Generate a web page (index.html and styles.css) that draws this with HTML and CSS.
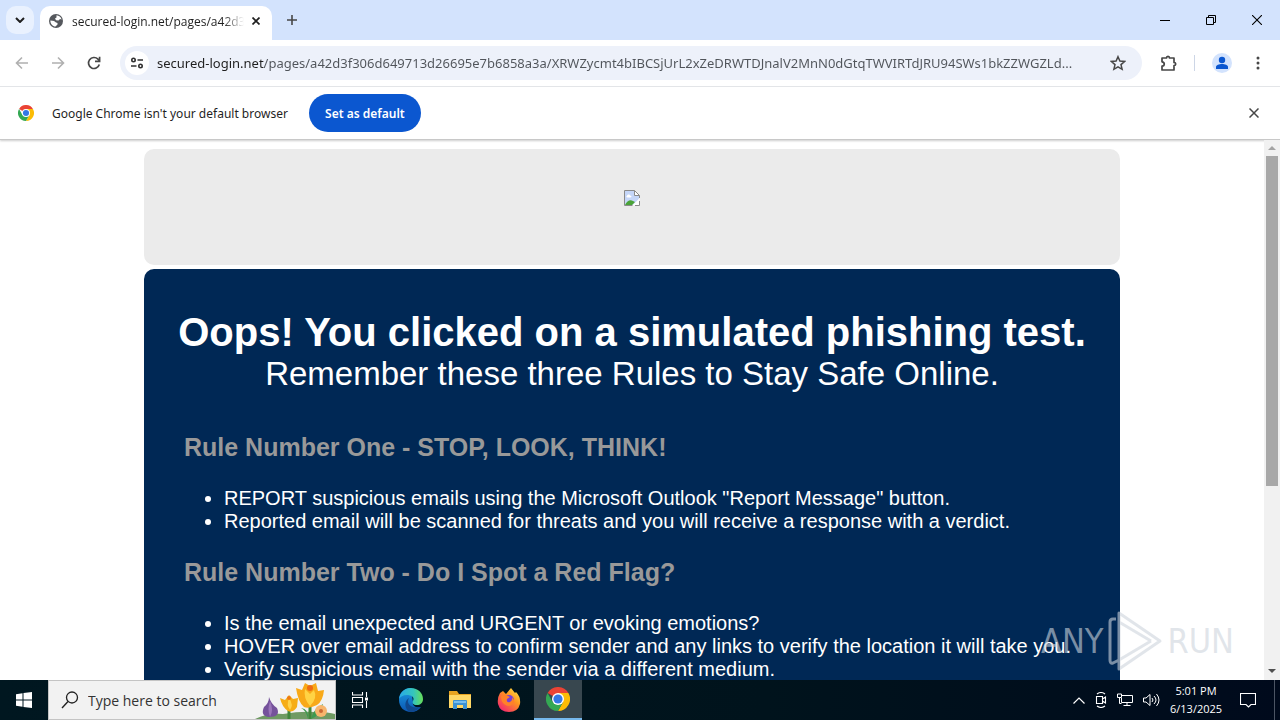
FILE: index.html
```html
<!DOCTYPE html>
<html lang="en">
<head>
    <meta charset="UTF-8">
    <meta name="viewport" content="width=device-width, initial-scale=1.0">
    <title>secured-login.net</title>
    <link rel="stylesheet" href="styles.css">
</head>
<body>
    <header class="browser">
        <div class="tab-strip">
            <button class="tab-search" aria-label="Search tabs">
                <svg width="10" height="6" viewBox="0 0 10 6"><path d="M1 1l4 4 4-4" fill="none" stroke="#1f1f1f" stroke-width="2"/></svg>
            </button>
            <div class="tab">
                <svg width="14" height="14" viewBox="0 0 14 14">
                    <circle cx="7" cy="7" r="7" fill="#55585d"/>
                    <path d="M7.5 1.3C10 1.5 12 3.2 12.6 5.5L11 5 9.500 6.500 7 6.200 6 4.500 7.500 3.500zM1.400 6.500L5 7l2 1.500 1.500.5v1.500L6.500 12.600C3.700 12.400 1.400 10 1.400 7z" fill="#fff"/>
                </svg>
                <span class="tab-title">secured-login.net/pages/a42d3</span>
                <button class="tab-close" aria-label="Close tab">
                    <svg width="8" height="8" viewBox="0 0 8 8"><path d="M.5.500l7 7M7.500.500l-7 7" stroke="#1f1f1f" stroke-width="1.700"/></svg>
                </button>
            </div>
            <button class="new-tab" aria-label="New tab">
                <svg width="12" height="12" viewBox="0 0 12 12"><path d="M6 1v10M1 6h10" stroke="#474747" stroke-width="1.600"/></svg>
            </button>
            <div class="window-buttons">
                <button aria-label="Minimize"><svg width="10" height="10" viewBox="0 0 10 10"><path d="M0 5.500h10" stroke="#000"/></svg></button>
                <button aria-label="Restore"><svg width="10" height="10" viewBox="0 0 10 10"><path d="M.5 2.500h7v7h-7zM2.500 2.500v-2h7v7h-2" fill="none" stroke="#000"/></svg></button>
                <button aria-label="Close"><svg width="10" height="10" viewBox="0 0 10 10"><path d="M0 0l10 10M10 0L0 10" stroke="#000" stroke-width="1.100"/></svg></button>
            </div>
        </div>

        <div class="toolbar">
            <button aria-label="Back"><svg width="14" height="14" viewBox="0 0 14 14"><path d="M13 7H2M7 1.500L1.500 7 7 12.500" fill="none" stroke="#b0b0b0" stroke-width="1.600"/></svg></button>
            <button aria-label="Forward"><svg width="14" height="14" viewBox="0 0 14 14"><path d="M1 7h11M7 1.500L12.500 7 7 12.500" fill="none" stroke="#b0b0b0" stroke-width="1.600"/></svg></button>
            <button aria-label="Reload"><svg width="14" height="14" viewBox="0 0 14 14"><path d="M12.300 8.500A5.500 5.500 0 1 1 11 3.200L12.500 4.800" fill="none" stroke="#474747" stroke-width="1.700"/><path d="M12.600.800v4.600H8" fill="none" stroke="#474747" stroke-width="1.700"/></svg></button>
            <div class="omnibox">
                <button class="site-info" aria-label="Site information">
                    <svg width="14" height="12" viewBox="0 0 14 12"><g fill="none" stroke="#303030" stroke-width="1.600"><circle cx="3.500" cy="3" r="1.700"/><path d="M7.500 3H13M1 9h5.500"/><circle cx="10.500" cy="9" r="1.700"/></g></svg>
                </button>
                <input class="url" type="text" aria-label="Address" value="secured-login.net/pages/a42d3f306d649713d26695e7b6858a3a/XRWZycmt4bIBCSjUrL2xZeDRWTDJnalV2MnN0dGtqTWVIRTdJRU94SWs1bkZZWGZLd...">
                <button class="star" aria-label="Bookmark">
                    <svg width="16" height="16" viewBox="0 0 16 16"><path d="M8 1.700l1.900 4.400 4.700.4-3.600 3.100 1.100 4.700L8 11.800l-4.100 2.500L5 9.600 1.400 6.500l4.700-.4z" fill="none" stroke="#474747" stroke-width="1.500"/></svg>
                </button>
            </div>
            <div class="toolbar-end">
                <button aria-label="Extensions"><svg width="18" height="18" viewBox="0 0 18 18"><path d="M2 4h4.500c0-2.200 3-2.200 3 0H14v4.500c2.300 0 2.300 3 0 3V16H2v-3.800c3-.3 3-4.100 0-4.400z" fill="none" stroke="#474747" stroke-width="1.700" stroke-linejoin="round"/></svg></button>
                <span class="divider"></span>
                <button class="profile" aria-label="Profile"><svg width="20" height="20" viewBox="0 0 20 20"><circle cx="10" cy="10" r="10" fill="#d3e3fd"/><circle cx="10" cy="7" r="3.200" fill="#0b57d0"/><path d="M4 16v-2c0-4 12-4 12 0v2z" fill="#0b57d0"/></svg></button>
                <button aria-label="Menu"><svg width="4" height="14" viewBox="0 0 4 14" fill="#474747"><circle cx="2" cy="2" r="1.500"/><circle cx="2" cy="7" r="1.500"/><circle cx="2" cy="12" r="1.500"/></svg></button>
            </div>
        </div>

        <div class="infobar">
            <svg width="16" height="16" viewBox="0 0 24 24"><use href="#chrome"/></svg>
            <span>Google Chrome isn't your default browser</span>
            <button class="set-default">Set as default</button>
            <button class="infobar-close" aria-label="Dismiss"><svg width="10" height="10" viewBox="0 0 10 10"><path d="M.5.500l9 9M9.500.500l-9 9" stroke="#474747" stroke-width="1.500"/></svg></button>
        </div>
    </header>

    <div class="viewport">
        <main class="page">
            <section class="logo-panel">
                <svg width="16" height="16" viewBox="0 0 16 16" role="img" aria-label="Missing image">
                    <path d="M.5.500h10l5 5v10H.500z" fill="#fff"/>
                    <path d="M1 1h9.500v4.500H15V9L9 15H1z" fill="#c5d6f8"/>
                    <path d="M3 6c0-2 3-2 3-.500 2 0 2 2 0 2H3.500C2 7.500 2 6 3 6z" fill="#fff"/>
                    <path d="M1 15c2-4 5-6 8-4l2 1-3 3z" fill="#4ba338"/>
                    <path d="M15 9l-6 6h2l4-4z" fill="#fff"/>
                    <path d="M15.500 8V5.500l-5-5H.500v15h8M10.500.500v5h5M11 15.500h4.500V11" fill="none" stroke="#8a8a8a"/>
                </svg>
            </section>
            <section class="lesson">
                <h1>Oops! You clicked on a simulated phishing test.</h1>
                <p class="subtitle">Remember these three Rules to Stay Safe Online.</p>
                <h2>Rule Number One - STOP, LOOK, THINK!</h2>
                <ul>
                    <li>REPORT suspicious emails using the Microsoft Outlook "Report Message" button.</li>
                    <li>Reported email will be scanned for threats and you will receive a response with a verdict.</li>
                </ul>
                <h2>Rule Number Two - Do I Spot a Red Flag?</h2>
                <ul>
                    <li>Is the email unexpected and URGENT or evoking emotions?</li>
                    <li>HOVER over email address to confirm sender and any links to verify the location it will take you.</li>
                    <li>Verify suspicious email with the sender via a different medium.</li>
                </ul>
            </section>
        </main>
        <div class="scrollbar">
            <svg width="8" height="4" viewBox="0 0 8 4"><path d="M0 4l4-4 4 4z" fill="#a3a3a3"/></svg>
            <div class="track"><div class="thumb"></div></div>
            <svg width="8" height="4" viewBox="0 0 8 4"><path d="M0 0l4 4 4-4z" fill="#505050"/></svg>
        </div>
        <div class="watermark">
            <span>ANY</span>
            <svg width="56" height="62" viewBox="0 0 56 62"><path d="M9 9H6q-3 0-3 3v38q0 4 3 3l6-3M12 3v56l41-28zM12 12l32 19M12 50l32-19" fill="none" stroke="currentColor" stroke-width="3" stroke-linejoin="round"/></svg>
            <span>RUN</span>
        </div>
    </div>

    <footer class="taskbar">
        <button class="start" aria-label="Start">
            <svg width="16" height="16" viewBox="0 0 16 16" fill="#fff"><path d="M0 2.200l6.500-.9v6.200H0zM7.500 1.100L16 0v7.500H7.500zM0 8.500h6.500v6.200L0 13.800zM7.500 8.500H16V16l-8.500-1.100z"/></svg>
        </button>
        <label class="search">
            <svg width="18" height="18" viewBox="0 0 18 18"><circle cx="11" cy="6.500" r="5.500" fill="none" stroke="#222" stroke-width="1.300"/><path d="M7 10.500L1 17" stroke="#222" stroke-width="1.400"/></svg>
            <input type="text" placeholder="Type here to search" aria-label="Search">
            <svg width="80" height="38" viewBox="0 0 80 38">
                <path d="M0 38q12-6 28-5 18-3 32-2 14 0 20 2v5z" fill="#6f9a63"/>
                <path d="M55 38V24M34 38V28" stroke="#41863c" stroke-width="3"/>
                <path d="M56 38q2-10 12-15-2 11-12 15zM53 38q-2-9-7-11 8 1 7 11z" fill="#3e9950"/>
                <path d="M14 16q0 6-5 10-4 9 5 10 12 0 8-9-6-4-8-11z" fill="#75529b"/>
                <path d="M15 20q-3 8 0 16 4-7 0-16z" fill="#9b76ba"/>
                <path d="M25 17l5 2 4-5 4 4 5-1-1 9q-4 6-9 4-6-4-8-13z" fill="#f6ad16"/>
                <path d="M34 17q-3 7 1 12 4-5-1-12z" fill="#ffd249"/>
                <path d="M41 7l6 2 3-7 5 3 6-3 2 8 6-1q-1 11-7 15-8 4-13 2-6-5-8-19z" fill="#f8a918"/>
                <path d="M50 8q-2 9 5 17 8-8 4-16l-4 4z" fill="#ffd344"/>
                <circle cx="55" cy="7" r="3" fill="#ed6b13"/><circle cx="34" cy="17" r="2" fill="#ed7a13"/>
                <circle cx="66" cy="30" r="6" fill="#f7b56d"/><circle cx="66" cy="30" r="2" fill="#cb6934"/>
            </svg>
        </label>
        <nav class="apps">
            <button class="task-view" aria-label="Task View"><svg width="16" height="16" viewBox="0 0 16 16"><path d="M.5 0v3h10V0M.500 16v-3h10v3M.500 5.500h10v5H.500zM14.500 0v5M14.500 9v7" fill="none" stroke="#fff" stroke-width="1.100"/><path d="M13 5.500h3v3h-3z" fill="#fff"/></svg></button>
            <button aria-label="Edge">
                <svg width="24" height="24" viewBox="0 0 24 24">
                    <defs>
                        <linearGradient id="edgeTop" x1="0" x2="1"><stop offset="0" stop-color="#28a9e8"/><stop offset=".6" stop-color="#35c5bd"/><stop offset="1" stop-color="#67df58"/></linearGradient>
                        <linearGradient id="edgeLow" x1="0" y1="0" x2="0" y2="1"><stop offset="0" stop-color="#1c9de2"/><stop offset="1" stop-color="#0b55b2"/></linearGradient>
                    </defs>
                    <path d="M12 0C4 0 0 6 0 12c0 7 5 12 12 12 4 0 8-2 10-5-5 1-9-1-8-5z" fill="url(#edgeLow)"/>
                    <path d="M0 11C1 4 6 0 12 0c7 0 12 5 12 11 0 4-3 6-6 6-4 0-5-2-4-4 2-4-2-6-6-6-4 0-7 2-8 4z" fill="url(#edgeTop)"/>
                    <path d="M10 10c-3 5 1 11 11 9-3 4-7 5-10 5-6-3-6-11-1-14z" fill="#10488d"/>
                </svg>
            </button>
            <button aria-label="File Explorer"><svg width="22" height="20" viewBox="0 0 22 20"><path d="M0 1h8l2 3h12v14H0z" fill="#e8a420"/><path d="M0 5h22v13H0z" fill="#ffd866"/><path d="M4 19v-8q0-1 1-1h12q1 0 1 1v8h-4v-4H8v4z" fill="#3b92d4"/><path d="M5 11h12v2H5z" fill="#74bdf0"/></svg></button>
            <button aria-label="Firefox">
                <svg width="24" height="24" viewBox="0 0 24 24">
                    <defs><linearGradient id="fire" x1="1" y1="0" x2=".2" y2="1"><stop offset="0" stop-color="#fff04b"/><stop offset=".45" stop-color="#ff9420"/><stop offset="1" stop-color="#f32371"/></linearGradient></defs>
                    <path d="M3 5l3-2 3 3 5-6 4 5 1-1q5 5 4 12-2 8-11 8T1 16Q0 10 3 5z" fill="url(#fire)"/>
                    <circle cx="12" cy="12" r="5" fill="#7540d8"/>
                    <path d="M4 8q4-2 7 0l2 1-3 2q-1 4 3 3 3-2 2-5 4 4 1 7-4 4-9 0-3-3-3-8z" fill="#ff8228"/>
                </svg>
            </button>
            <button class="active" aria-label="Chrome">
                <svg width="24" height="24" viewBox="0 0 24 24">
                    <g id="chrome">
                        <path d="M12 12L1.600 6A12 12 0 0 1 22.400 6z" fill="#ea4335"/>
                        <path d="M12 12V6h10.400A12 12 0 0 1 12 24l5-9z" fill="#fbbc05"/>
                        <path d="M12 12l5 3-5 9A12 12 0 0 1 1.600 6l5 9z" fill="#34a853"/>
                        <circle cx="12" cy="12" r="6" fill="#fff"/><circle cx="12" cy="12" r="4.600" fill="#3478e5"/>
                    </g>
                </svg>
            </button>
        </nav>
        <div class="tray">
            <svg width="12" height="7" viewBox="0 0 12 7"><path d="M.5 6.500L6 1l5.500 5.500" fill="none" stroke="#fff" stroke-width="1.200"/></svg>
            <svg width="12" height="16" viewBox="0 0 12 16"><path d="M1.500 4.500h6v7h-6zM7.500 7l3-2v6l-3-2M2 2q4-3 8 0M2 14q4 3 8 0" fill="none" stroke="#fff" stroke-width="1.100"/></svg>
            <svg width="16" height="14" viewBox="0 0 16 14"><path d="M5 2.500h10.500v7H4.500V5M10 9.500v3M6.500 12.500h7M.500 1h4v3.500h-4zM2.500 4.500v6h2" fill="none" stroke="#fff"/></svg>
            <svg width="17" height="14" viewBox="0 0 17 14"><path d="M.5 5v4h2.500l4 3.500v-11L3 5zM9 5q2 2 0 4M11 3q4 4 0 8M13.500 1q5 6 0 12" fill="none" stroke="#fff"/></svg>
            <div class="clock"><span>5:01 PM</span><span>6/13/2025</span></div>
            <button aria-label="Notifications"><svg width="16" height="16" viewBox="0 0 16 16"><path d="M.5 1.500h15v11H11l-2.500 2.500L6 12.500H.500z" fill="none" stroke="#fff" stroke-width="1.100"/></svg></button>
            <span class="show-desktop"></span>
        </div>
    </footer>
</body>
</html>
```
FILE: styles.css
```css
* {
    box-sizing: border-box;
}

body {
    margin: 0;
    height: 100vh;
    display: flex;
    flex-direction: column;
    overflow: hidden;
    background-color: #fff;
    font-family: "Noto Sans", "Open Sans", sans-serif;
    font-size: 12px;
    color: #1f1f1f;
}

button {
    display: flex;
    align-items: center;
    justify-content: center;
    padding: 0;
    border: none;
    background: none;
    font: inherit;
    color: inherit;
}

input {
    min-width: 0;
    padding: 0;
    border: none;
    outline: none;
    background: none;
    font: inherit;
}

svg {
    display: block;
    flex: none;
}

/* Browser window */
.browser {
    position: relative;
    flex: none;
    border-bottom: 1px solid #c8c8c8;
    box-shadow: 0 1px 2px rgba(0, 0, 0, 0.2);
}

.tab-strip {
    display: flex;
    align-items: center;
    height: 40px;
    padding-left: 6px;
    background-color: #d3e3fd;
}

.tab-search {
    width: 28px;
    height: 28px;
    border-radius: 10px;
    background-color: #e9f1fe;
}

.tab {
    display: flex;
    align-items: center;
    align-self: flex-end;
    width: 232px;
    height: 34px;
    margin-left: 6px;
    padding: 0 8px 4px 9px;
    border-radius: 10px 10px 0 0;
    background-color: #fff;
}

.tab-title {
    flex: 1;
    margin: 0 4px 0 9px;
    overflow: hidden;
    white-space: nowrap;
    font-family: "Open Sans", "Noto Sans", sans-serif;
    -webkit-mask-image: linear-gradient(to right, #000 88%, transparent);
    mask-image: linear-gradient(to right, #000 88%, transparent);
}

.tab-close {
    width: 16px;
    height: 16px;
}

.new-tab {
    width: 28px;
    height: 28px;
    margin-left: 6px;
}

.window-buttons {
    display: flex;
    margin-left: auto;
}

.window-buttons button {
    width: 46px;
    height: 40px;
}

.toolbar {
    display: flex;
    align-items: center;
    height: 47px;
    padding: 0 8px 0 4px;
    border-bottom: 1px solid #e3e5e8;
}

.toolbar > button {
    width: 36px;
    height: 34px;
}

.omnibox {
    display: flex;
    flex: 1;
    align-items: center;
    height: 34px;
    margin-left: 8px;
    padding: 0 12px 0 5px;
    border-radius: 17px;
    background-color: #edf1fa;
}

.site-info {
    width: 24px;
    height: 24px;
    border-radius: 12px;
    background-color: #fff;
}

.url {
    flex: 1;
    height: 24px;
    margin: 0 8px;
    font-size: 13px;
    color: transparent;
    /* host is darker than the path */
    background-image: linear-gradient(to right, #1f1f1f 107px, #50545a 107px);
    -webkit-background-clip: text;
    background-clip: text;
}

.star {
    width: 24px;
    height: 24px;
}

.toolbar-end {
    display: flex;
    align-items: center;
    width: 130px;
    padding: 0 12px 0 18px;
    justify-content: space-between;
}

.divider {
    width: 1px;
    height: 16px;
    background-color: #cdd6e6;
}

.profile {
    margin-right: 8px;
}

.infobar {
    display: flex;
    align-items: center;
    height: 52px;
    padding: 0 21px 0 18px;
}

.infobar span {
    margin: 0 21px 0 18px;
}

.set-default {
    width: 112px;
    height: 38px;
    border-radius: 19px;
    background-color: #0b57d0;
    font-weight: 600;
    color: #fff;
}

.infobar-close {
    margin-left: auto;
}

/* Page */
.viewport {
    position: relative;
    display: flex;
    flex: 1;
    min-height: 0;
    font-family: Arial, "Liberation Sans", sans-serif;
}

.page {
    display: flex;
    flex: 1;
    flex-direction: column;
    gap: 4px;
    padding: 9px 144px 0;
    overflow: hidden;
}

.logo-panel {
    display: flex;
    flex: none;
    justify-content: center;
    height: 116px;
    padding-top: 41px;
    border-radius: 10px;
    background-color: #ebebeb;
}

.lesson {
    flex: 1;
    padding: 40px 32px 0;
    border-radius: 10px 10px 0 0;
    background-color: #002855;
    color: #fff;
}

.lesson h1 {
    margin: 0;
    font-size: 40px;
    line-height: 46px;
    text-align: center;
}

.subtitle {
    margin: 0 0 40px;
    font-size: 33px;
    line-height: 38px;
    text-align: center;
}

.lesson h2 {
    margin: 0 8px 25px;
    font-size: 25px;
    line-height: 29px;
    color: #999;
}

.lesson ul {
    margin: 0 0 25px 8px;
    padding-left: 40px;
    font-size: 20px;
    line-height: 23px;
}

.lesson li {
    white-space: nowrap;
}

.scrollbar {
    display: flex;
    flex-direction: column;
    align-items: center;
    width: 16px;
    padding: 6px 0 7px;
    background-color: #f1f1f1;
}

.track {
    flex: 1;
    width: 12px;
    margin: 6px 0;
}

.thumb {
    height: 65%;
    background-color: #a8a8a8;
}

.watermark {
    position: absolute;
    right: 46px;
    bottom: 8px;
    display: flex;
    align-items: center;
    gap: 4px;
    font-family: "DejaVu Sans Condensed", sans-serif;
    font-size: 34px;
    color: rgba(205, 212, 220, 0.6);
}

/* Taskbar */
.taskbar {
    display: flex;
    flex: none;
    height: 40px;
    background: linear-gradient(to right, #001720, #00131c 60%, #000a1c);
    color: #fff;
    font-family: "Open Sans", "Noto Sans", sans-serif;
}

.start {
    width: 48px;
}

.search {
    display: flex;
    align-items: center;
    width: 288px;
    padding-left: 12px;
    border: 1px solid #c4c4c4;
    background-color: #f2f2f2;
}

.search input {
    flex: 1;
    margin-left: 9px;
    font-size: 14px;
}

.search input::placeholder {
    color: #333;
    opacity: 1;
}

.apps {
    display: flex;
    gap: 1px;
}

.apps button {
    width: 48px;
}

.apps .task-view {
    margin-right: 2px;
}

.apps .active {
    border-bottom: 2px solid #76b9ed;
    background-color: #38474f;
}

.tray {
    display: flex;
    align-items: center;
    gap: 10px;
    margin-left: auto;
}

.clock {
    display: flex;
    flex-direction: column;
    width: 52px;
    line-height: 18px;
    text-align: center;
    font-size: 11px;
}

.tray button {
    width: 32px;
}

.show-desktop {
    width: 6px;
    height: 40px;
    border-left: 1px solid #4c5564;
}
```
